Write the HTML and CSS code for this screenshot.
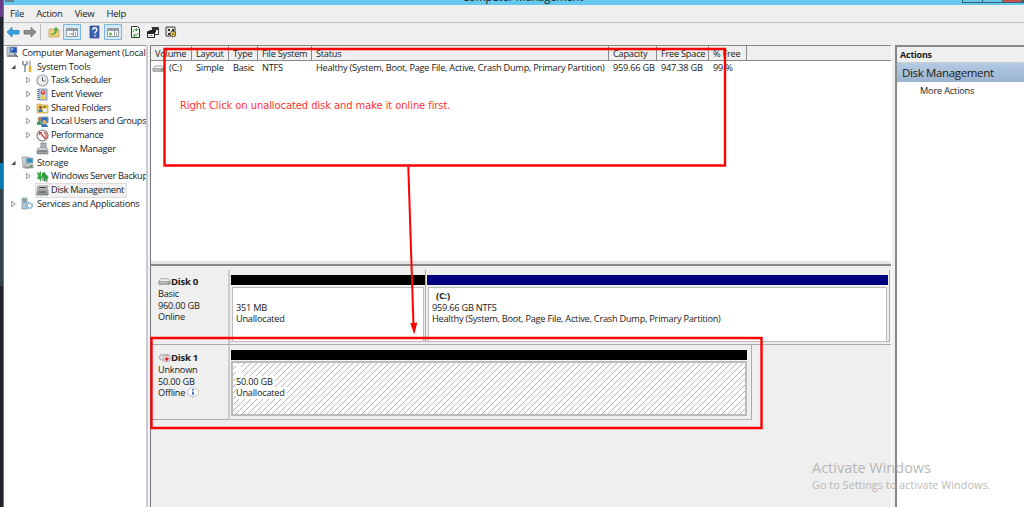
FILE: index.html
```html
<!DOCTYPE html>
<html lang="en">
<head>
<meta charset="utf-8">
<title>Computer Management</title>
<link rel="stylesheet" href="styles.css">
</head>
<body>
<svg class="defs" width="0" height="0" aria-hidden="true">
  <defs>
    <linearGradient id="metal" x2="0" y2="1"><stop stop-color="#eee"/><stop offset="1" stop-color="#888"/></linearGradient>
    <pattern id="diagonals" width="6" height="6" patternUnits="userSpaceOnUse"><path d="M-1 7L7-1M-1 1L1-1M5 7l2-2" stroke="#aaa" stroke-width=".9"/></pattern>
    <symbol id="computer" viewBox="0 0 13 13"><path d="M1 1h3v9H1z" fill="#c6ccd5" stroke="#77808c" stroke-width=".6"/><path d="M4 1h7v6H4z" fill="#2456b8" stroke="#9ba4b2" stroke-width=".8"/><path d="M5 2h3L5 6z" fill="#76b4ed"/><path d="M2 9l8-1 2 3H1z" fill="#89919c"/><path d="M8 7l4 4" stroke="#555" stroke-width="1"/></symbol>
    <symbol id="tools" viewBox="0 0 13 13"><path d="M4 5v7M2 1v3l2 1.500 2-1.500V1" fill="none" stroke="#8b949b" stroke-width="1.600"/><path d="M9 1v6" stroke="#8a8f96" stroke-width="1.200"/><path d="M9 6v6" stroke="#e7b52c" stroke-width="2.600"/></symbol>
    <symbol id="clock" viewBox="0 0 13 13"><circle cx="6.5" cy="6.5" r="5.5" fill="#e9edf0" stroke="#989b9e" stroke-width="1.2"/><path d="M6.5 3v4h3" fill="none" stroke="#475b70"/><path d="M7 7l3-3v4z" fill="#e4bd76" opacity=".6"/></symbol>
    <symbol id="event" viewBox="0 0 13 13"><path d="M3 1h8v11H3z" fill="#bcd3ed" stroke="#6b7fa1" stroke-width=".8"/><path d="M2 1v11" stroke="#465a80" stroke-width="1.5" stroke-dasharray="1 1"/><circle cx="7" cy="4.5" r="2.3" fill="#dd3b30"/><path d="M7 3v2" stroke="#fff"/><path d="M7 6l3 5H4z" fill="#f3ca36"/></symbol>
    <symbol id="folder" viewBox="0 0 13 13"><path d="M1 3h4l1 1h6v8H1z" fill="#ebca65" stroke="#bd9a3a" stroke-width=".6"/><circle cx="4.5" cy="6.5" r="1.4" fill="#77512d"/><circle cx="8.5" cy="6" r="1.3" fill="#8b6735"/><path d="M2.5 11V9l2-1 2 1v2z" fill="#4879bc"/><path d="M7 11V8l2-1 2 1v3z" fill="#eee"/></symbol>
    <symbol id="users" viewBox="0 0 13 13"><circle cx="4" cy="4" r="2.2" fill="#b47c48"/><path d="M1 10V7l3-2 3 2v3z" fill="#4aa061"/><path d="M5 2h7v6H5z" fill="#3471bd" stroke="#919dac"/><circle cx="8.5" cy="7" r="2" fill="#e5b25b"/><path d="M5 12c0-4 7-4 7 0z" fill="#356fbe"/></symbol>
    <symbol id="perf" viewBox="0 0 13 13"><circle cx="6.5" cy="6.5" r="5.5" fill="#fff" stroke="#777" stroke-width="1.1"/><path d="M3.500 3l6 7M3.500 6V3.500H6M8 3l2 2v4" fill="none" stroke="#d13c39" stroke-width="1.200"/></symbol>
    <symbol id="device" viewBox="0 0 13 13"><path d="M5 1h5v6H5z" fill="#aab4ba" stroke="#6e777c" stroke-width=".7"/><path d="M2 6h9l1 2v4H1V8z" fill="url(#metal)" stroke="#7d8386" stroke-width=".6"/><path d="M2 9h9" stroke="#4c5559"/></symbol>
    <symbol id="storage" viewBox="0 0 13 13"><path d="M1 1h7v11H2z" fill="#cbd0d2" stroke="#919899" stroke-width=".7"/><path d="M5 2h7v5H5z" fill="#368fc0" stroke="#acb8bf"/><path d="M4 8h8v4H4z" fill="url(#metal)" stroke="#858b8b" stroke-width=".6"/><circle cx="10" cy="10" r="1" fill="#32a63b"/></symbol>
    <symbol id="backup" viewBox="0 0 13 13"><path d="M7 4l5 2-1 6-5-2z" fill="#a9b2b0" stroke="#7d8785" stroke-width=".6"/><path d="M1 2l2 1 2-2v4l2 2-2 2v3L3 9 1 9l1-3z" fill="#3cad42"/><path d="M6 3l3-1 1 3 2 2-2 3-2 1V8L6 6z" fill="#299c39"/></symbol>
    <symbol id="diskmgmt" viewBox="0 0 13 13"><path d="M2 2h10l-1 3H1zM2 6h10v5H1V7z" fill="url(#metal)" stroke="#737876" stroke-width=".7"/><path d="M3 3.500h7M3 8h7" stroke="#3f4543" stroke-width="1"/><path d="M9 10h2" stroke="#70a66c"/></symbol>
    <symbol id="services" viewBox="0 0 13 13"><path d="M1 1h5v11H1z" fill="#b5c9cf" stroke="#77939f" stroke-width=".7"/><path d="M2 3h3M2 5h3" stroke="#557a8c"/><circle cx="8.5" cy="8.5" r="2.7" fill="#f5fafd" stroke="#79a5c6" stroke-width="1.8" stroke-dasharray="1.4 .7"/></symbol>
    <symbol id="drive" viewBox="0 0 14 10"><path d="M1 5l2-3h8l2 3v3H1z" fill="#eee" stroke="#888" stroke-width=".7"/><path d="M1 5h12v3H1z" fill="#bbb" stroke="#777" stroke-width=".5"/><path d="M10 6.500h2" stroke="#43a83b" stroke-width="1.200"/></symbol>
    <symbol id="closed" viewBox="0 0 6 8"><path d="M1.2 1.2v5.6L4.6 4z" fill="#fff" stroke="#888" stroke-width=".9"/></symbol>
    <symbol id="open" viewBox="0 0 6 8"><path d="M5 1.8V6H.8z" fill="#444"/></symbol>
  </defs>
</svg>
<div class="screen">
  <div class="desktop"></div>
  <div class="window">
    <header class="titlebar"><span class="title">Computer Management</span><svg class="app-icon" viewBox="0 0 10 3"><path d="M0 0h9v2H0z" fill="#68808e"/></svg><div class="controls"><i></i><i></i><i class="close"></i></div></header>
    <nav class="menu"><span>File</span><span>Action</span><span>View</span><span>Help</span></nav>
    <div class="toolbar">
      <svg width="180" height="22" viewBox="4 23 180 22">
        <path d="M7 32l5-4.500v3h7v3.500h-7v3z" fill="#36a4e3" stroke="#247eb4" stroke-width=".8"/>
        <path d="M36 32l-5-4.500v3h-7v3.500h7v3z" fill="#8c8c8c" stroke="#727272" stroke-width=".8"/>
        <path d="M40.500 24v16" stroke="#bbb"/>
        <path d="M49 29h4l1 1h5v7H49z" fill="#edcf77" stroke="#c6a453" stroke-width=".7"/><path d="M51 34c3 0 4-2 4-4h-2l3-3 3 3h-2c0 4-3 5-6 5z" fill="#53a64a"/>
        <path d="M63.500 24.500h17v15h-17z" fill="#d5e9f7" stroke="#79b7df"/><path d="M66.500 28.500h11v8h-11z" fill="#fff" stroke="#929ba2"/><path d="M67 30h10" stroke="#969da2" stroke-width="2"/><path d="M73.500 31v5" stroke="#999"/><path d="M69 34h1m1 0h2M75 33h1m-1 2h1" stroke="#55616d"/>
        <path d="M90 26h9v12h-9z" fill="#3d62b2" stroke="#27468a" stroke-width=".7"/><path d="M92.800 30c0-3 4-3 4 0 0 1.700-2 1.400-2 3.500m0 1.500v1.500" fill="none" stroke="#fff" stroke-width="1.300"/>
        <path d="M104.500 24.500h17v15h-17z" fill="#d5e9f7" stroke="#79b7df"/><path d="M107.500 28.500h11v8h-11z" fill="#fff" stroke="#929ba2"/><path d="M108 30h10" stroke="#969da2" stroke-width="2"/><path d="M114.500 31v5" stroke="#999"/><path d="M109.500 32v4l3-2z" fill="#43a63c"/><path d="M116 33h1m-1 2h1" stroke="#55616d"/>
        <path d="M131.500 26.500h6l2 2v9h-8z" fill="#fff" stroke="#333"/><path d="M133 32c0-2 2-3 4-2m-1-2l1.500 2-2 1M138 33c0 2-2 3-4 2m1 2l-1.500-2 2-1" fill="none" stroke="#28a03a"/>
        <path d="M151.500 27.500h7v7h-4" fill="#fff" stroke="#333"/><path d="M152 28h6v2h-6z" fill="#333"/><path d="M147.500 31.500h7v6h-7z" fill="#f7f7f7" stroke="#222"/><path d="M148 32l2-2h3l3-1v3l-3 2h-5z" fill="#222"/><path d="M149.500 35.500h3" stroke="#555" stroke-width=".7"/>
        <path d="M166 27h9v9h-9z" fill="#e5e5df" stroke="#3e3e3e"/><path d="M168 29h2v2h-2zm4 0h2v2h-2zm-4 4h2v2h-2z" fill="#333"/><circle cx="173" cy="34" r="2.600" fill="#ffd33a" stroke="#333" stroke-dasharray="1.200 .8" stroke-width="1.300"/><circle cx="173" cy="34" r=".8" fill="#333"/>
      </svg>
    </div>
    <main class="panes">
      <aside class="tree">
        <div class="node l0"><svg class="ic"><use href="#computer"/></svg><span class="root">Computer Management (Local</span></div>
        <div class="node l1"><svg class="tw"><use href="#open"/></svg><svg class="ic"><use href="#tools"/></svg><span>System Tools</span></div>
        <div class="node l2"><svg class="tw"><use href="#closed"/></svg><svg class="ic"><use href="#clock"/></svg><span>Task Scheduler</span></div>
        <div class="node l2"><svg class="tw"><use href="#closed"/></svg><svg class="ic"><use href="#event"/></svg><span>Event Viewer</span></div>
        <div class="node l2"><svg class="tw"><use href="#closed"/></svg><svg class="ic"><use href="#folder"/></svg><span>Shared Folders</span></div>
        <div class="node l2"><svg class="tw"><use href="#closed"/></svg><svg class="ic"><use href="#users"/></svg><span>Local Users and Groups</span></div>
        <div class="node l2"><svg class="tw"><use href="#closed"/></svg><svg class="ic"><use href="#perf"/></svg><span>Performance</span></div>
        <div class="node l2"><i class="tw"></i><svg class="ic"><use href="#device"/></svg><span>Device Manager</span></div>
        <div class="node l1"><svg class="tw"><use href="#open"/></svg><svg class="ic"><use href="#storage"/></svg><span>Storage</span></div>
        <div class="node l2"><svg class="tw"><use href="#closed"/></svg><svg class="ic"><use href="#backup"/></svg><span>Windows Server Backup</span></div>
        <div class="node l2"><i class="tw"></i><div class="selected"><svg class="ic"><use href="#diskmgmt"/></svg><span>Disk Management</span></div></div>
        <div class="node l1"><svg class="tw"><use href="#closed"/></svg><svg class="ic"><use href="#services"/></svg><span>Services and Applications</span></div>
      </aside>
      <div class="splitter"></div>
      <section class="center">
        <div class="volumes">
          <div class="grid head"><b>Volume</b><b>Layout</b><b>Type</b><b>File System</b><b>Status</b><b>Capacity</b><b>Free Space</b><b>% Free</b></div>
          <div class="grid row"><span class="vol"><svg><use href="#drive"/></svg>(C:)</span><span>Simple</span><span>Basic</span><span>NTFS</span><span>Healthy (System, Boot, Page File, Active, Crash Dump, Primary Partition)</span><span>959.66 GB</span><span>947.38 GB</span><span>99 %</span></div>
        </div>
        <div class="disks">
          <div class="disk first">
            <div class="info"><div class="name"><svg><use href="#drive"/></svg><strong>Disk 0</strong></div><span>Basic</span><span>960.00 GB</span><span>Online</span></div>
            <div class="part small"><div class="bar"></div><div class="body"><span>&nbsp;</span><span>351 MB</span><span>Unallocated</span></div></div>
            <div class="part primary"><div class="bar"></div><div class="body"><strong>(C:)</strong><span>959.66 GB NTFS</span><span>Healthy (System, Boot, Page File, Active, Crash Dump, Primary Partition)</span></div></div>
          </div>
          <div class="disk second">
            <div class="info"><div class="name"><svg viewBox="0 0 14 10"><path d="M1 5l2-3h8l2 3-8 3-3-1z" fill="#ddd" stroke="#888" stroke-width=".7"/><circle cx="9.500" cy="6" r="3.700" fill="#fff" stroke="#777" stroke-width=".7"/><path d="M9.500 3.500v3M7.500 6l2 2.500 2-2.500z" fill="#d22" stroke="#d22" stroke-width="1"/></svg><strong>Disk 1</strong></div><span>Unknown</span><span>50.00 GB</span><span class="offline">Offline<svg viewBox="0 0 12 12"><path d="M6 1c7 0 7 8 1 8l-1 2-1-2C-1 9-1 1 6 1z" fill="#fff" stroke="#aaa" stroke-width=".7"/><path d="M6 2v1.500M6 4.500V8" stroke="#2153cd" stroke-width="1.500"/></svg></span></div>
            <div class="part offline-part"><div class="bar"></div><div class="body hatch"><svg class="hatch-lines"><rect width="512" height="51" fill="url(#diagonals)"/></svg><div class="hatch-text"><span class="blank">&nbsp;</span><span>50.00 GB</span><span>Unallocated</span></div></div></div>
          </div>
        </div>
      </section>
      <div class="splitter right"></div>
      <aside class="actions"><div class="actions-title">Actions</div><div class="actions-group">Disk Management</div><div class="more">More Actions</div></aside>
    </main>
  </div>
  <div class="watermark"><div>Activate Windows</div><p>Go to Settings to activate Windows.</p></div>
  <div class="note">Right Click on unallocated disk and make it online first.</div>
  <svg class="annotations" viewBox="0 0 1024 507"><g fill="none" stroke="red"><path d="M164.500 49h560.500v116.500h-560.500z" stroke-width="2.400"/><path d="M151.500 338h610v90h-610z" stroke-width="2.400"/><path d="M408.300 167l5.200 158" stroke-width="2"/></g><path d="M410.300 323l7-.3-3.100 11.800z" fill="red"/></svg>
</div>
</body>
</html>
```
FILE: styles.css
```css
* { box-sizing: border-box; }
body { margin: 0; overflow: hidden; color: #202020; font: 9.2px/12px "Open Sans", "Noto Sans", sans-serif; letter-spacing: -.23px; }
.defs { position: absolute; }
.screen { position: relative; display: flex; width: 1024px; height: 507px; overflow: hidden; background: #efefef; white-space: nowrap; }
.desktop { width: 4px; background: linear-gradient(#653c85 0 17px, #20242d 17px 163px, #087bb2 163px 189px, #32434d 189px 286px, #202129 286px); border-right: 1px solid #777; }
.window { display: flex; flex: 1; flex-direction: column; min-width: 0; }
.titlebar { display: flex; justify-content: space-between; position: relative; height: 5px; overflow: hidden; background: #66c8ec; }
.title { position: absolute; left: 458px; top: -9px; font-size: 11.2px; line-height: 12px; letter-spacing: -.2px; }
.app-icon { width: 10px; height: 3px; margin-left: 1px; }
.controls { display: flex; width: 62px; height: 3px; border: 1px solid #39616d; border-top: 0; }
.controls i { width: 21px; border-right: 1px solid #39616d; }
.controls .close { background: #c7504c; }
.menu { display: flex; align-items: center; gap: 12px; height: 18px; padding-left: 6px; border-bottom: 1px solid #bcbcbc; font-size: 9.5px; }
.toolbar { height: 22px; }
.toolbar svg { display: block; }
.panes { display: grid; grid-template-columns: 142px 4px 741px 4px 129px; height: 462px; }
.tree { overflow: hidden; background: #fff; border-top: 1px solid #999; }
.splitter { border-left: 2px solid #c9cbd4; background: #f4f4f4; }
.splitter.right { border-left: 1px solid #fff; background: #efefef; }
.node { display: flex; align-items: center; height: 13.73px; }
.l0 { padding-left: 2px; }
.node .root { letter-spacing: -.24px; }
.l1 { padding-left: 6px; }
.l2 { padding-left: 21px; letter-spacing: -.29px; }
.tw { flex: none; width: 7px; height: 8px; margin-right: 4px; }
.ic { flex: none; width: 13px; height: 13px; margin-right: 3px; }
.l2 .ic { margin-right: 2.5px; margin-left: -.5px; }
.selected { display: flex; align-items: center; height: 13px; padding-right: 2px; background: #f1f1f1; outline: 1px solid #ddd; }
.center { display: flex; flex-direction: column; min-width: 0; border-top: 1px solid #888; border-left: 1px solid #777; }
.volumes { height: 220px; background: #fff; border-bottom: 2px solid #888; box-shadow: inset 0 -3px #e5e5e5; }
.grid { display: grid; grid-template-columns: 41px 37px 29px 54px 297px 48px 52px 38px; }
.head { height: 15px; background: #efefef; border-bottom: 1px solid #888; }
.head b { padding-left: 4px; border-right: 1px solid #888; font-weight: 400; line-height: 15px; }
.row { line-height: 14px; }
.row span { padding-left: 4px; }
.row .vol { display: flex; align-items: center; padding-left: 1px; }
.vol svg { width: 13px; height: 9px; margin-right: 4px; }
.disks { flex: 1; background: #efefef; }
.disk { display: flex; height: 75px; }
.first { margin-top: 4px; border-bottom: 1px solid #aaa; }
.info { display: flex; flex-direction: column; width: 79px; padding: 6px 0 0 7px; border-right: 2px solid #ccc; line-height: 11.6px; }
.name { display: flex; align-items: center; height: 12px; }
.name svg { width: 13px; height: 11px; margin-top: -2px; }
.name strong { font-size: 9.6px; letter-spacing: -.3px; }
.part { height: 72px; padding: 5px 1px 0; border-bottom: 1px solid #bbb; border-right: 1px solid #aaa; }
.small { width: 196px; padding-right: 0; }
.primary { width: 464px; }
.bar { height: 10px; background: #000; }
.primary .bar { background: #000080; }
.body { display: flex; flex-direction: column; height: 54px; margin: 2px 1px 0; padding: 2px 0 0 3px; border: 1px solid #bbb; border-bottom: 0; background: #fff; line-height: 11.6px; }
.body strong { margin-left: 4px; }
.second .info { padding-top: 7px; border-bottom: 1px solid #aaa; }
.offline { display: flex; align-items: center; }
.offline svg { width: 12px; height: 12px; margin-left: 2px; }
.offline-part { width: 522px; height: 75px; padding: 5px 4px 0 1px; }
.offline-part .bar { width: 516px; }
.offline-part .body { position: relative; height: 55px; margin: 1px 0 0; width: 516px; border: 2px solid #bbb; padding: 0 0 0 3px; }
.hatch-lines { position: absolute; inset: 0; width: 512px; height: 51px; }
.hatch-text { position: relative; display: flex; flex-direction: column; align-items: flex-start; padding-top: 1px; }
.hatch-text span { background: #fff; padding-right: 2px; }
.hatch-text .blank { width: 5px; }
.actions { background: #fff; border-left: 2px solid #888; border-top: 2px solid #888; }
.actions-title { height: 16px; padding-left: 3px; background: #efefef; border-bottom: 1px solid #ccc; font-weight: 700; line-height: 16px; font-size: 9px; }
.actions-group { height: 19px; padding-left: 5px; background: linear-gradient(#b5cbe3, #9bb3d0); font-size: 11.5px; line-height: 20px; letter-spacing: -.35px; }
.more { padding-left: 23px; line-height: 18px; letter-spacing: -.18px; }
.watermark { position: absolute; left: 812px; top: 459px; color: #a6a6a6cc; font-size: 14.5px; line-height: 18px; letter-spacing: 0; }
.watermark p { margin: 0; font-size: 10.9px; line-height: 16px; }
.note { position: absolute; left: 180px; top: 99px; color: #ff3434; font: 10px/13px "DejaVu Sans", sans-serif; letter-spacing: -.1px; }
.annotations { position: absolute; inset: 0; width: 1024px; height: 507px; pointer-events: none; }
```
